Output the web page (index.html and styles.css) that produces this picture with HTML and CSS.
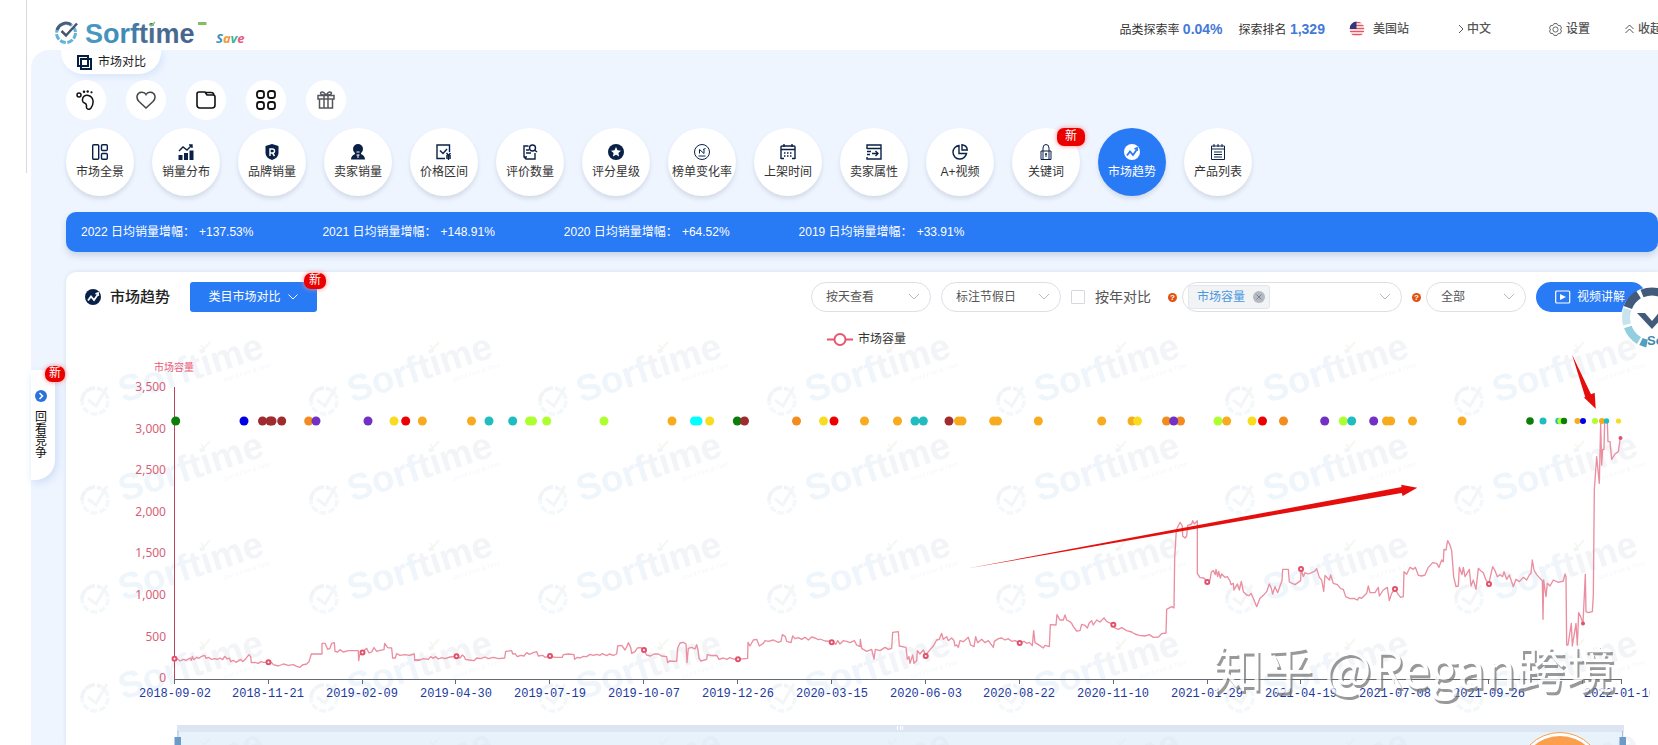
FILE: index.html
```
<!DOCTYPE html>
<html lang="zh-CN">
<head>
<meta charset="utf-8">
<title>Sorftime 市场趋势</title>
<link rel="stylesheet" href="styles.css">
</head>
<body>
<svg class="defs" aria-hidden="true">
  <defs>
    <symbol id="i-trend" viewBox="0 0 16 16"><circle cx="8" cy="8" r="8" fill="currentColor" stroke="none"/><path d="M3 11.500 6 7.500l3 3.500 3.500-5M10.500 5l2.500-1 .3 2.800" fill="none" stroke="var(--cut)" stroke-width="1.800"/></symbol>
    <symbol id="i-down" viewBox="0 0 12 12"><path d="M1.500 3.500 6 8l4.500-4.500" fill="none" stroke="currentColor"/></symbol>
    <linearGradient id="brand" x1="0" x2="1"><stop offset="0" stop-color="#4a9cc4"/><stop offset=".42" stop-color="#3f86b4"/><stop offset=".5" stop-color="#4a6f96"/><stop offset="1" stop-color="#45648c"/></linearGradient>
  </defs>
</svg>
<div class="page">
  <div class="gutter"></div>
  <div class="main">
    <header class="topbar">
      <a class="brand" href="#" aria-label="Sorftime">
        <svg width="166" height="30" viewBox="54 18 166 30">
          <g fill="none" stroke-width="3">
            <circle cx="66" cy="33" r="9.500" stroke="#62b3d6" stroke-dasharray="6 1.500"/>
            <path d="M57 30a9.500 9.500 0 0 1 14-5.500" stroke="#4b5d7b"/>
            <path d="m61.500 31 4.500 4.500 11-12" stroke="#465670" stroke-width="2.500"/>
          </g>
          <text class="logo-word" x="85" y="43" fill="url(#brand)">Sorftime</text>
          <path d="m149 24 2 2 4-4" stroke="#8cc66b" stroke-width="1.500" fill="none"/>
          <path d="M198 22h8.500v3H198z" fill="#86bd60"/>
        </svg>
        <span class="save"><i class="s1">S</i><i class="s2">a</i><i class="s3">v</i><i class="s4">e</i></span>
      </a>
      <div class="stats">
        <span>品类探索率 <b>0.04%</b></span>
        <span>探索排名 <b>1,329</b></span>
      </div>
      <nav class="topnav">
        <a class="site" href="#"><svg width="16" height="16" viewBox="0 0 15 16"><clipPath id="fc"><circle cx="7.500" cy="8" r="7.500"/></clipPath><g clip-path="url(#fc)"><path fill="#fff" d="M0 0h15v16H0z"/><path stroke="#e85560" stroke-width="1.500" d="M0 1.500h15M0 4.500h15M0 7.500h15M0 10.500h15M0 13.500h15"/><path fill="#33367c" d="M0 0h7v8H0z"/></g></svg>美国站</a>
        <a class="lang" href="#"><svg width="6" height="10" viewBox="0 0 6 10"><path d="m1 1 4 4-4 4" fill="none" stroke="#555"/></svg>中文</a>
        <a class="setting" href="#"><svg width="13" height="13" viewBox="0 0 13 13" fill="none" stroke="#666"><path d="M4.500 1.800 5 .6h3l.5 1.200 1.500.9 1.300-.2 1.200 2.500-.8 1v1l.8 1-1.200 2.500-1.300-.2-1.500.9-.5 1.200H5l-.5-1.200-1.500-.9-1.300.2L.5 8l.8-1V6l-.8-1 1.200-2.500 1.300.2z"/><circle cx="6.500" cy="6.500" r="2.600"/></svg>设置</a>
        <a class="fold" href="#"><svg width="9" height="10" viewBox="0 0 9 10"><path d="m.5 5 4-4 4 4m-8 4 4-4 4 4" fill="none" stroke="#555"/></svg>收起</a>
      </nav>
    </header>
    <div class="workspace">
      <aside class="rail">
        <button class="history" type="button">
          <svg width="12" height="12" viewBox="0 0 12 12"><circle cx="6" cy="6" r="6" fill="#2b72dd"/><path d="m4.500 3 3 3-3 3" fill="none" stroke="#fff" stroke-width="1.500"/></svg>
          <span>回看竞争</span>
          <em class="badge">新</em>
        </button>
      </aside>
      <main class="content">
        <a class="compare-tab" href="#"><svg width="15" height="15" viewBox="0 0 15 15" fill="none" stroke="#041d42" stroke-width="2"><path d="M1 1h10v10H1zM4 4h10v10H4z"/></svg>市场对比</a>
        <div class="tools">
          <button type="button" aria-label="足迹"><svg width="20" height="20" viewBox="0 0 20 20" fill="none" stroke="#111" stroke-width="1.500"><circle cx="3" cy="5" r="2"/><path d="M6.500 10.500c-.5-4 3-6 6-5C17.500 7 18.500 13 15 18c-2 2.500-5 1-4.500-1.500.3-2-.5-3-2-3.500-1.200-.4-1.900-1.200-2-2.500z"/><g fill="#111" stroke="none"><circle cx="8" cy="1.800" r="1.300"/><circle cx="11.700" cy="1.500" r="1.200"/><circle cx="15.500" cy="2.300" r="1.100"/></g></svg></button>
          <button type="button" aria-label="收藏"><svg width="20" height="20" viewBox="0 0 20 20" fill="none" stroke="#444" stroke-width="1.500"><path d="M10 18 3 11.500C-.5 8 .8 2.500 5.500 2.200 8 2 9.500 3.500 10 4.500c.5-1 2-2.500 4.500-2.300 4.700.3 6 5.800 2.500 9.300z"/></svg></button>
          <button type="button" aria-label="文件夹"><svg width="20" height="20" viewBox="0 0 20 20" fill="none" stroke="#111" stroke-width="1.600"><path d="M1 4q0-2 2-2h6l2 3h6q2 0 2 2v8q0 3-3 3H4q-3 0-3-3zM10 2.500h5q3 0 3 3"/></svg></button>
          <button type="button" aria-label="应用"><svg width="20" height="20" viewBox="0 0 20 20" fill="none" stroke="#111" stroke-width="1.800"><rect x="1" y="1" width="7" height="7" rx="2.500"/><rect x="12" y="1" width="7" height="7" rx="2.500"/><rect x="1" y="12" width="7" height="7" rx="2.500"/><rect x="12" y="12" width="7" height="7" rx="2.500"/></svg></button>
          <button type="button" aria-label="礼物"><svg width="20" height="20" viewBox="0 0 20 20" fill="none" stroke="#55555c" stroke-width="1.500"><path d="M2 5.500h16V9H2zM3.500 9v9h13V9M8 5.500V18M12 5.500V18M9 5C3 5 4 1.500 6.500 2 8.500 2.500 9.500 5 10 5c.5 0 1.500-2.500 3.500-3 2.500-.5 3.500 3-2.500 3"/></svg></button>
        </div>
        <nav class="modules">
          <a href="#"><svg viewBox="0 0 16 16"><rect x=".7" y=".7" width="6" height="14.600" rx="1"/><rect x="9.500" y=".7" width="5.800" height="5.800" rx="1"/><rect x="9.500" y="9.500" width="5.800" height="5.800" rx="1"/></svg>市场全景</a>
          <a href="#"><svg viewBox="0 0 16 16"><path d="m1 7 4-4 4 3 5-5M11 1h3v3"/><path class="f" d="M.5 11h4v5h-4zM6 9h4v7H6zM11.500 6.500h4V16h-4z"/></svg>销量分布</a>
          <a href="#"><svg viewBox="0 0 16 16"><path class="f" d="m8 0 6.500 2v7q0 5-6.500 7-6.500-2-6.500-7V2z"/><path stroke="#fff" d="M6 12V5h2.500q2 0 2 2t-2 2H6m2.500 0 2 3"/></svg>品牌销量</a>
          <a href="#"><svg viewBox="0 0 16 16"><circle class="f" cx="8" cy="5" r="5"/><path class="f" d="M1 15.500q0-4 4-5.500V8h6v2q4 1.500 4 5.500z"/><path stroke="#fff" stroke-width="1" d="M6.500 8h3M8 11v3M6.500 11h3"/></svg>卖家销量</a>
          <a href="#"><svg viewBox="0 0 16 16"><path d="M9 14.500H1V1h12.500v7M4 6.500l3 3L11 5M10.500 9l2 2.500 2-2.500m-2 2.500V16m-2.500-4h5m-5 2h5"/></svg>价格区间</a>
          <a href="#"><svg viewBox="0 0 16 16"><path d="M6.500 2H2v11l2 2h9V9M2 13h3M4 6h3M4 9h5"/><circle cx="10.500" cy="4" r="3"/><path d="m12.500 6 2.500 2"/></svg>评价数量</a>
          <a href="#"><svg viewBox="0 0 16 16"><circle class="f" cx="8" cy="8" r="8"/><path fill="#fff" stroke="none" d="m8 3 1.500 3.300 3.500.4-2.600 2.400.7 3.500L8 10.800l-3.100 1.800.7-3.500L3 6.700l3.500-.4z"/></svg>评分星级</a>
          <a class="thin" href="#"><svg viewBox="0 0 16 16"><circle cx="8" cy="8" r="7.500"/><path d="M5.500 9.500V5.500l4.500 4V5.500M9 5.500l2.500-1M4.500 12h7"/></svg>榜单变化率</a>
          <a href="#"><svg viewBox="0 0 16 16"><path d="M1 15V3q0-1 1-1h12q1 0 1 1v12M1 5.500h14M4 0v3M12 0v3M1 14.500h3M12 14.500h3"/><path stroke-dasharray="1.500 1.500" d="M4 9h8.500M4 12h8.500"/></svg>上架时间</a>
          <a href="#"><svg viewBox="0 0 16 16"><path d="M1 5V1h14v14H1v-2M1 4.500h14M1 7.500h4M1 10.500h3M6 9.500h6M9.500 7l2.500 2.500L9.500 12"/></svg>卖家属性</a>
          <a href="#"><svg viewBox="0 0 16 16"><path d="M7 1.500a6.800 6.800 0 1 0 7.500 8H7zM10 .8V6h5.300Q15 1.500 10 .8z"/></svg>A+视频</a>
          <a class="thin" href="#"><svg viewBox="0 0 16 16"><path d="M3 7h10v8.500H3zM5 7V4q0-3.500 3-3.500T11 4v3M5 7v8M11 7v8M8 10v3"/><circle class="f" cx="8" cy="10" r="1"/></svg>关键词<em class="badge big">新</em></a>
          <a href="#" class="on" aria-current="page"><svg viewBox="0 0 16 16"><use href="#i-trend"/></svg>市场趋势</a>
          <a href="#" class="thin"><svg viewBox="0 0 16 16"><path d="M1.500 2h13v13.500h-13zM1.500 5h13M4 0v3M8 0v3M12 0v3M4 8h8M4 10.500h8M4 13h8"/></svg>产品列表</a>
        </nav>
        <dl class="growth">
          <div><dt>2022 日均销量增幅：</dt><dd>+137.53%</dd></div>
          <div><dt>2021 日均销量增幅：</dt><dd>+148.91%</dd></div>
          <div><dt>2020 日均销量增幅：</dt><dd>+64.52%</dd></div>
          <div><dt>2019 日均销量增幅：</dt><dd>+33.91%</dd></div>
        </dl>
        <section class="panel">
          <div class="panel-head">
            <h1><svg class="title-icon" width="16" height="16" viewBox="0 0 16 16"><use href="#i-trend"/></svg>市场趋势</h1>
            <button class="primary" type="button">类目市场对比<svg width="12" height="12"><use href="#i-down"/></svg><em class="badge">新</em></button>
            <form class="filters">
              <select aria-label="时间粒度"><option>按天查看</option></select>
              <select aria-label="节假日"><option>标注节假日</option></select>
              <label class="check"><input type="checkbox">按年对比</label>
              <div class="with-help"><span class="help">?</span>
                <div class="multi" role="group" aria-label="指标"><span class="tag">市场容量<button type="button" aria-label="移除"><svg width="12" height="12" viewBox="0 0 12 12"><circle cx="6" cy="6" r="6" fill="#b4b9c2"/><path d="m3.500 3.500 5 5m0-5-5 5" stroke="#7c828d"/></svg></button></span><svg class="caret" width="12" height="8"><path d="m1 1 5 5 5-5" fill="none" stroke="currentColor"/></svg></div></div>
              <div class="with-help"><span class="help">?</span><select class="short" aria-label="范围"><option>全部</option></select></div>
              <button class="video" type="button"><svg width="16" height="14" viewBox="0 0 16 14"><rect x=".7" y="1" width="14" height="12" rx="1" fill="none" stroke="#fff" stroke-width="1.200"/><path d="M5 4v6l6-3z" fill="#fff"/></svg>视频讲解</button>
            </form>
          </div>
          <svg class="chart" viewBox="66 322 1592 423" role="img" aria-label="市场容量">
            <defs>
              <linearGradient id="wm" x1="0" x2="1"><stop offset="0" stop-color="#eff6fb"/><stop offset=".48" stop-color="#eff5fa"/><stop offset=".5" stop-color="#f2f4f7"/><stop offset="1" stop-color="#f2f4f7"/></linearGradient>
              <pattern id="tile" x="77" y="325" width="229" height="99" patternUnits="userSpaceOnUse">
                <g fill="none" stroke-width="3.500">
                  <circle cx="18" cy="76" r="13" stroke="#f3f8fb" stroke-dasharray="7 2"/>
                  <path d="M5 76a13 13 0 0 1 18-12" stroke="#f1f3f6" stroke-dasharray="9 2"/>
                  <path d="m11 75 8 6 11-19" stroke="#f3f5f7" stroke-width="3"/>
                </g>
                <text class="wm-word" transform="translate(46 78) rotate(-18)" fill="url(#wm)">Sorftime</text>
                <path d="m124 20 3 4 6-7" stroke="#f6f8f0" stroke-width="2" fill="none"/>
                <text class="wm-sub" transform="translate(147 57) rotate(-18)">Sort it Fine &amp; Time</text>
              </pattern>
            </defs>
            <rect x="66" y="322" width="1592" height="423" fill="url(#tile)"/>
            <g class="legend"><path d="M827 339.500h26"/><circle cx="840" cy="339.500" r="5.500"/><text x="858" y="343">市场容量</text></g>
            <text class="axis-name" x="154" y="371">市场容量</text>
            <g class="y-labels">
              <text x="166" y="391">3,500</text><text x="166" y="433">3,000</text><text x="166" y="474">2,500</text><text x="166" y="516">2,000</text><text x="166" y="557">1,500</text><text x="166" y="599">1,000</text><text x="166" y="641">500</text><text x="166" y="682">0</text>
            </g>
            <path class="y-axis" d="M174.500 387v293"/>
            <path class="x-axis" d="M174 679.500h1448M174.500 680v4M268.500 680v4M362.500 680v4M455.500 680v4M549.500 680v4M643.500 680v4M737.500 680v4M831.500 680v4M925.500 680v4M1019.500 680v4M1113.500 680v4M1207.500 680v4M1300.500 680v4M1394.500 680v4M1488.500 680v4M1582.500 680v4M1621.500 680v4"/>
            <g class="x-labels">
              <text x="175" y="697">2018-09-02</text><text x="268" y="697">2018-11-21</text><text x="362" y="697">2019-02-09</text><text x="456" y="697">2019-04-30</text><text x="550" y="697">2019-07-19</text><text x="644" y="697">2019-10-07</text><text x="738" y="697">2019-12-26</text><text x="832" y="697">2020-03-15</text><text x="926" y="697">2020-06-03</text><text x="1019" y="697">2020-08-22</text><text x="1113" y="697">2020-11-10</text><text x="1207" y="697">2021-01-29</text><text x="1301" y="697">2021-04-19</text><text x="1395" y="697">2021-07-08</text><text x="1489" y="697">2021-09-26</text>
              <svg x="1580" y="680" width="70" height="24" viewBox="1580 680 70 24"><text class="last" x="1584" y="697">2022-01-16</text></svg>
            </g>
            <g class="series">
              <g transform="translate(0 480) scale(.33333)"><path d="M523 536 532 537 540 543 550 538 558 541 570 534 574 541 577 529 581 539 590 532 597 535 605 529 614 526 618 535 626 532 634 538 645 536 652 538 660 534 668 539 674 529 682 537 688 534 692 545 700 541 708 547 716 542 722 538 728 545 736 538 742 530 747 524 752 530 754 548 765 547 775 550 783 545 790 547 805 547 815 548 820 554 835 558 850 552 865 556 880 554 890 559 900 562 907 555 920 552 927 545 934 522H966V490H975L983 508 990 505 995 490 1003 488 1005 514 1013 516 1020 509 1030 516 1045 512H1075L1076 542 1079 525 1087 517 1100 505 1107 519 1115 516 1122 503 1130 514 1140 511 1152 509 1154 490 1163 503 1175 504 1178 534H1186L1190 521 1200 526 1215 524 1228 526 1243 522 1244 541 1260 541"/></g>
              <g transform="translate(400 400) scale(.33333)"><path d="M44 780 60 780 70 776 85 778 92 770 100 775 107 770 115 777 125 773 135 776 150 771 169 769 180 774 187 765 193 770 196 778 208 780 222 782 230 774 242 776 255 771 265 776 280 772 295 776 314 774 317 754 335 752 338 762 345 761 352 770 362 766 372 768 380 758 388 763 400 758 410 755 415 768 428 766 435 772 450 768 465 772 487 772 490 764 505 762 522 764 524 778 532 772 540 774 550 769 560 770 570 763 580 766 590 763 600 766 607 761 620 767 628 762 640 766 650 762 653 738 665 736 675 750 680 741 685 728 692 742 695 760 705 755 712 744 722 743 732 750 740 765 752 768 762 762 775 762 785 768 800 770 803 788 808 783 830 784 833 745 840 729 850 727 858 732 861 788 865 745 875 742 885 747 890 734 894 750 897 775 903 783 920 778 922 764 935 767 950 766 957 778 970 774 980 778 990 773 1000 777 1013 778 1043 775 1044 727 1050 738 1060 720 1070 718 1078 738 1090 730 1095 722 1105 724 1120 720 1135 727 1143 724 1147 704 1156 710 1160 724 1173 728 1178 708 1185 716 1195 713 1205 718 1215 712 1225 720 1235 711 1245 714 1255 719 1260 718"/></g>
              <g transform="translate(800 400) scale(.33333)"><path d="M60 717 75 723 95 724 107 733 113 722 120 732 130 722 140 724 150 728 163 722 170 735 180 740 181 718 185 745 200 754 215 748 222 777 226 748 240 752 255 742 265 748 275 745 278 697 295 695 298 738 318 742 322 778 327 770 330 790 338 765 342 790 350 782 352 752 360 762 370 750 377 765 388 752 400 738 410 720 418 718 425 700 430 718 440 710 445 722 455 714 462 722 465 738 470 735 475 742 480 722 490 725 505 712 512 735 522 740 527 710 533 728 545 718 555 728 565 722 580 742 583 724 595 716 605 714 615 720 625 716 635 724 645 722 660 729 672 724 680 730 688 727 697 737 701 692 705 728 715 734 730 744 735 736 748 740 751 674 768 675 771 644 780 660 790 660 795 645 800 660 808 664 815 670 820 680 830 693 840 692 845 673 855 676 862 684 868 668 875 662 880 675 890 660 900 666 912 654 920 664 935 672 945 684 955 688 965 683 980 692 995 696 1005 702 1018 706 1035 708 1048 704 1060 712 1075 711 1085 701 1098 699 1100 628 1115 620 1122 624 1124 475 1129 390 1140 367 1147 378 1148 408 1155 414 1160 408 1163 376 1175 372 1178 362 1183 372 1192 362V520L1200 533 1212 534 1222 546"/></g>
              <g transform="translate(1150 480) scale(.33333)"><path d="M172 306 180 300 184 276 190 272 196 284 198 268 203 290 206 274 211 294 215 282 225 292 232 290 240 303 243 314 250 310 252 330 262 312 268 330 274 304 280 335 290 345 297 347 303 340 312 360 320 380 330 355 342 344 350 335 358 312 364 325 368 342 375 320 383 338 390 318 396 302 398 268H415L418 306 435 314 452 302 453 267 460 290 465 278 475 282 485 278 495 273 500 266 508 292 515 300 521 334 525 286 538 300 542 285 550 310 562 314 572 326 580 328 587 350 600 356 612 355 622 360 628 352 635 355 650 340 655 318 660 338 675 338 685 322 688 348 700 330 712 322 718 362 725 340 735 327 745 344 752 352 760 350 762 275 770 283 780 262 790 268 796 262 805 286 815 288 825 285 835 262 848 248 860 250 867 262 875 240 880 245 882 208 888 210 893 182 900 195 905 212 911 290 918 320 925 318 928 262 936 284 940 262 945 290 958 268 963 318 970 300 978 328 985 265 992 272 1000 278 1008 300 1016 312 1028 260 1035 272 1042 290 1050 284 1058 290 1062 275 1070 298 1078 285 1090 320 1098 298 1108 305 1120 292 1130 300 1138 285 1143 280 1147 240 1152 270 1160 284 1170 295 1177 302 1179 418 1181 300 1188 350 1192 310 1200 318 1210 300 1225 307 1240 303 1245 282 1248 290 1250 495 1254 495 1264 430 1267 498 1278 430 1282 495 1286 398 1292 410 1299 430 1306 283 1308 395 1315 398 1327 395 1330 345 1333 30 1340-70 1348 10 1352-170 1355-45 1358-92 1362-92 1364-176H1372L1374-115H1380L1385-62 1395-78 1405-85 1411-126"/></g>
            </g>
            <g class="points"></g>
            <g class="holidays"></g>
            <g fill="#e60d0d"><path d="M967 568.500 1401.700 487 1401 484.700 1417.300 487.700 1402.700 496 1401.700 493z"/><path d="M1572 354.500 1591 394.300 1594.700 392.700 1595.700 408.700 1583.700 397.300 1585.300 397.300z"/></g>
            <text class="credit" x="1213" y="688">知乎 @Regan跨境</text>
            <g class="zoom"><path fill="#dde5f2" d="M177 725h1447v7H177z"/><path fill="#d5e8f8" fill-opacity=".55" d="M177 732h1447v13H177z"/><path stroke="#fff" d="M897.500 726v4M900.500 726v4M902.500 726v4"/><path stroke="#a9c0d6" d="M178 731v6M1622.500 731v6"/><path fill="#6b9bc6" d="M174.500 737h6.500v8h-6.500zM1619.500 737h6.500v8h-6.500z"/></g>
            <g><circle cx="1560" cy="775" r="42.500" fill="#fff" stroke="#f7a04a"/><circle cx="1560" cy="776" r="40" fill="#fb9f4c"/></g>
          </svg>
        </section>
      </main>
    </div>
  </div>
</div>
<a class="float-logo" href="#" aria-label="Sorftime">
  <svg width="62" height="62" viewBox="0 0 62 62">
    <circle cx="31" cy="31" r="31" fill="#fff"/>
    <g fill="none" stroke-width="8">
      <path d="M6.800 20.500A26 26 0 0 1 17.500 7.500" stroke="#425b7a" stroke-width="9"/>
      <path d="M21 6.500a26 26 0 0 1 20 0" stroke="#425b7a"/>
      <path d="M6 37.500a26 26 0 0 1 .5-15.500" stroke="#c7e4ee"/>
      <path d="M18 53.500A26 26 0 0 1 6.800 40" stroke="#93cde0"/>
      <path d="M26 56.500a26 26 0 0 1-6-2" stroke="#4f9fc2"/>
    </g>
    <path d="m16 26 15 16 20-22-6-3-14 17-7-8z" fill="#425b7a"/>
    <text class="float-word" x="26" y="58">Sorftime</text>
  </svg>
</a>
<script src="chart.js"></script>
</body>
</html>
```
FILE: styles.css
```
* { box-sizing: border-box; }
body {
  margin: 0;
  overflow: hidden;
  background: #fff;
  color: #333;
  font: 12px/16px "Liberation Sans", "Noto Sans CJK SC", sans-serif;
  min-height: 100vh;
}
a { color: inherit; text-decoration: none; }
button, select, input { font: inherit; color: inherit; margin: 0; }
button { border: 0; background: none; padding: 0; cursor: pointer; }
.defs { position: absolute; width: 0; height: 0; }
.page { display: flex; position: relative; }
.gutter { flex: none; width: 31px; }
.gutter::before { content: ""; display: block; width: 26px; height: 173px; border-right: 1px solid #d9d9d9; }
.main { flex: 1; min-width: 0; }

.topbar { display: flex; align-items: center; height: 50px; padding: 8px 0 0 23px; white-space: nowrap; }
.brand { display: flex; align-items: center; margin-right: auto; margin-top: 8px; }
.brand svg { overflow: visible; }
.logo-word { font: bold 27px "Liberation Sans", sans-serif; }
.save { font: italic bold 13px/16px "Noto Sans", sans-serif; margin: 10px 0 0 -4px; }
.save i { font-style: italic; }
.s1 { color: #3b8fc4; } .s2 { color: #ef9a3d; } .s3 { color: #35b59a; } .s4 { color: #e85a86; }
.stats { display: flex; gap: 16px; color: #333; }
.stats b { font-size: 14px; color: #4479d8; }
.topnav { display: flex; flex: none; align-items: center; color: #555; font-weight: 500; margin: 0 -4px 0 24px; }
.topnav a { display: flex; align-items: center; }
.site { gap: 8px; margin-right: 49px; }
.lang { gap: 3px; margin-right: 58px; }
.setting { gap: 4px; margin-right: 35px; }
.fold { gap: 4px; }

.workspace { display: flex; background: #eef5ff; border-top-left-radius: 18px; min-height: calc(100vh - 50px); }
.rail { flex: none; width: 35px; padding-top: 320px; }
.history {
  position: relative;
  display: flex; flex-direction: column; align-items: center; gap: 9px;
  width: 24px; height: 110px; padding: 20px 4px 0 0;
  background: #fff; border-radius: 0 0 20px 0; box-shadow: 2px 3px 8px #cddcf5; color: #111;
}
.history span { width: 12px; line-height: 12px; }
.badge {
  position: absolute; font-style: normal; color: #fff; background: #eb0000;
  border-radius: 7px; width: 22px; height: 16px; line-height: 15px; text-align: center;
  box-shadow: 0 0 5px #f88;
}
.history .badge { top: -4px; right: -10px; width: 20px; }
.primary .badge { top: -9px; right: -9px; }
.badge.big { top: 0; right: -5px; width: 28px; height: 18px; line-height: 17px; }

.content { flex: 1; min-width: 0; }
.compare-tab {
  display: flex; align-items: center; gap: 6px; width: 100px; height: 24px; margin-left: -5px; padding-left: 16px;
  background: #fff; border-radius: 0 0 22px 22px; box-shadow: 3px 3px 6px #dbe7fa; color: #222;
}
.tools { display: flex; gap: 20px; margin-top: 6px; }
.tools button { display: grid; place-items: center; width: 40px; height: 40px; border-radius: 50%; background: #fff; }
.modules { display: flex; gap: 18px; margin-top: 8px; }
.modules a {
  position: relative; flex: none; width: 68px; height: 68px; padding-top: 16px; border-radius: 50%;
  display: flex; flex-direction: column; align-items: center; gap: 4px; white-space: nowrap;
  background: #fff; box-shadow: 0 3px 4px #d3dbe7;
}
.modules svg { flex: none; width: 16px; height: 16px; fill: none; stroke: #0a2147; stroke-width: 1.4; }
.modules .thin svg { stroke-width: 1; }
.modules .f { fill: #0a2147; stroke: none; }
.modules .on { background: #297af5; color: #fff; --cut: #297af5; }

.growth {
  display: flex; align-items: center; gap: 69px; height: 40px; margin: 16px 0 0; padding: 0 15px;
  background: #297af5; border-radius: 10px; box-shadow: 0 4px 6px #c9d5e8; color: #fff; white-space: nowrap;
}
.growth div { display: flex; gap: 4px; }
.growth dd { margin: 0; }

.panel { margin-top: 20px; background: #fff; border-top-left-radius: 10px; box-shadow: 0 0 4px #d5dfec; }
.panel-head { display: flex; align-items: flex-start; height: 50px; padding: 10px 12px 0 19px; white-space: nowrap; }
.panel-head h1 { display: flex; align-items: center; gap: 9px; height: 30px; margin: 0; font-size: 15px; font-weight: 500; color: #222; }
.title-icon { color: #0a2147; --cut: #fff; }
.primary {
  position: relative; display: flex; align-items: center; justify-content: center; gap: 6px;
  width: 127px; height: 30px; margin-left: 20px; border-radius: 3px; background: #297af5; color: #fff;
}
.filters { display: flex; align-items: center; gap: 10px; margin-left: auto; height: 30px; color: #555; }
.filters select {
  width: 120px; height: 30px; padding: 0 15px 0 14px; border: 1px solid #dcdfe4; border-radius: 15px; appearance: none;
  background: #fff url("data:image/svg+xml,%3Csvg xmlns='http://www.w3.org/2000/svg' width='12' height='8'%3E%3Cpath d='M1 1l5 5 5-5' fill='none' stroke='%23b5bac3'/%3E%3C/svg%3E") no-repeat right 10px center;
}
.filters .short { width: 100px; }
.check { display: flex; align-items: center; gap: 10px; font-size: 14px; }
.check input { appearance: none; width: 14px; height: 14px; border: 1px solid #d5d8de; border-radius: 1px; background: #fff; }
.with-help { display: flex; align-items: center; gap: 5px; }
.help { width: 9px; height: 9px; border-radius: 50%; background: #e2510f; color: #fff; font: bold 8px/9px "Liberation Sans", sans-serif; text-align: center; }
.check + .with-help { margin-left: 7px; }
.multi { display: flex; align-items: center; justify-content: space-between; width: 220px; height: 30px; padding: 0 10px 0 5px; border: 1px solid #dcdfe4; border-radius: 15px; background: #fff; }
.tag { display: flex; align-items: center; gap: 8px; height: 24px; padding: 0 4px 0 8px; border: 1px solid #e4e6ea; border-radius: 3px; background: #f2f3f5; color: #4a97de; }
.tag button { display: flex; }
.caret { color: #b5bac3; }
.video { display: flex; align-items: center; gap: 6px; width: 110px; height: 30px; padding-left: 19px; border-radius: 15px; background: #297af5; color: #fff; }

.chart { display: block; width: 100%; height: auto; font: 12px "Liberation Sans", "Noto Sans CJK SC", sans-serif; }
.wm-word { font: bold 37px "Liberation Sans", sans-serif; }
.wm-sub { font: italic 6px "Liberation Sans", sans-serif; fill: #f4f6f9; }
.legend path, .legend circle { fill: #fff; stroke: #e8576f; stroke-width: 2; }
.legend text { fill: #333; }
.axis-name { font-size: 10px; fill: #ee5a74; }
.y-labels { font: 12px "Noto Sans", sans-serif; fill: #d85f76; text-anchor: end; }
.y-axis { stroke: #b9475c; }
.x-axis { stroke: #666a72; fill: none; }
.x-labels { font: 12px "Liberation Mono", monospace; fill: #1c3a9e; text-anchor: middle; }
.x-labels .last { text-anchor: start; }
.series path { fill: none; stroke: #ea8ea0; stroke-width: 4; stroke-linejoin: round; }
.points circle { fill: #fff; stroke: #e0526a; stroke-width: 2; }
.credit { font: 50px "Noto Sans CJK SC", sans-serif; fill: #fff; filter: drop-shadow(2px 3px 0 #777); opacity: .75; }
.float-logo { position: absolute; top: 287px; right: -25px; }
.float-word { font: bold 13px "Liberation Sans", sans-serif; fill: #3d87b0; }
```
FILE: chart.js
```
const NS = 'http://www.w3.org/2000/svg';

function dot(parent, x, y, r, fill) {
  const c = document.createElementNS(NS, 'circle');
  c.setAttribute('cx', x);
  c.setAttribute('cy', y);
  c.setAttribute('r', r);
  if (fill) c.setAttribute('fill', fill);
  parent.appendChild(c);
}

const points = [[174.5, 658.7], [268.5, 662.3], [362.5, 652.5], [456.5, 656.3], [550, 656], [644, 650], [738, 659.3], [831.7, 642.3], [925.7, 656], [1019.7, 643], [1113.3, 624.7], [1207.3, 582], [1301, 569], [1395, 589], [1489, 584], [1583, 623.5], [1620.5, 438]];
const pointLayer = document.querySelector('.points');
points.forEach(([x, y], i) => dot(pointLayer, x, y, i > 14 ? 1 : 2));

const G = '#0b7d0b', B = '#0000e6', N = '#9e2b2e', O = '#f28c1e', P = '#7230c4', Y = '#f8dc20', R = '#ee0000', A = '#f8ab1e', T = '#1fbcc0', L = '#adff2f', C = '#0ff';
const days = [
  [175.7, G], [244, B], [262.5, N], [270, N], [272, N], [281.7, N], [308.7, O], [316, P], [368, P], [394, Y], [405.7, R], [422.3, A],
  [471.5, A], [489, T], [512.7, T], [529.5, L], [532.5, L], [546.7, L], [604, L], [672, A], [694.5, C], [698, C], [709.7, Y], [737.3, G], [744.5, N],
  [796.5, O], [823.5, Y], [834, R], [864.5, A], [897.5, A], [915, T], [923.3, T], [949, N], [958.5, A], [962, A], [993.7, A], [997.5, A],
  [1038.3, A], [1101.7, A], [1132, A], [1137.5, Y], [1166.5, O], [1180.5, O], [1173.7, P], [1218, L], [1226.7, A], [1252, Y], [1262.5, R], [1283.5, O],
  [1324.7, P], [1343.3, L], [1351.7, T], [1373.7, P], [1386.5, A], [1390.7, A], [1412.5, A], [1462, A],
  [1530, G, 3.8], [1543, T, 3.5], [1558.5, T, 3.2], [1560.5, L, 3.2], [1564, G, 3.2], [1577.5, A, 3], [1583, B, 3], [1595, L, 3], [1602, A, 3], [1606.5, T, 2.7], [1618.5, Y, 2.6]
];
const dayLayer = document.querySelector('.holidays');
days.forEach(([x, fill, r = 4.5]) => dot(dayLayer, x, 421, r, fill));
```
